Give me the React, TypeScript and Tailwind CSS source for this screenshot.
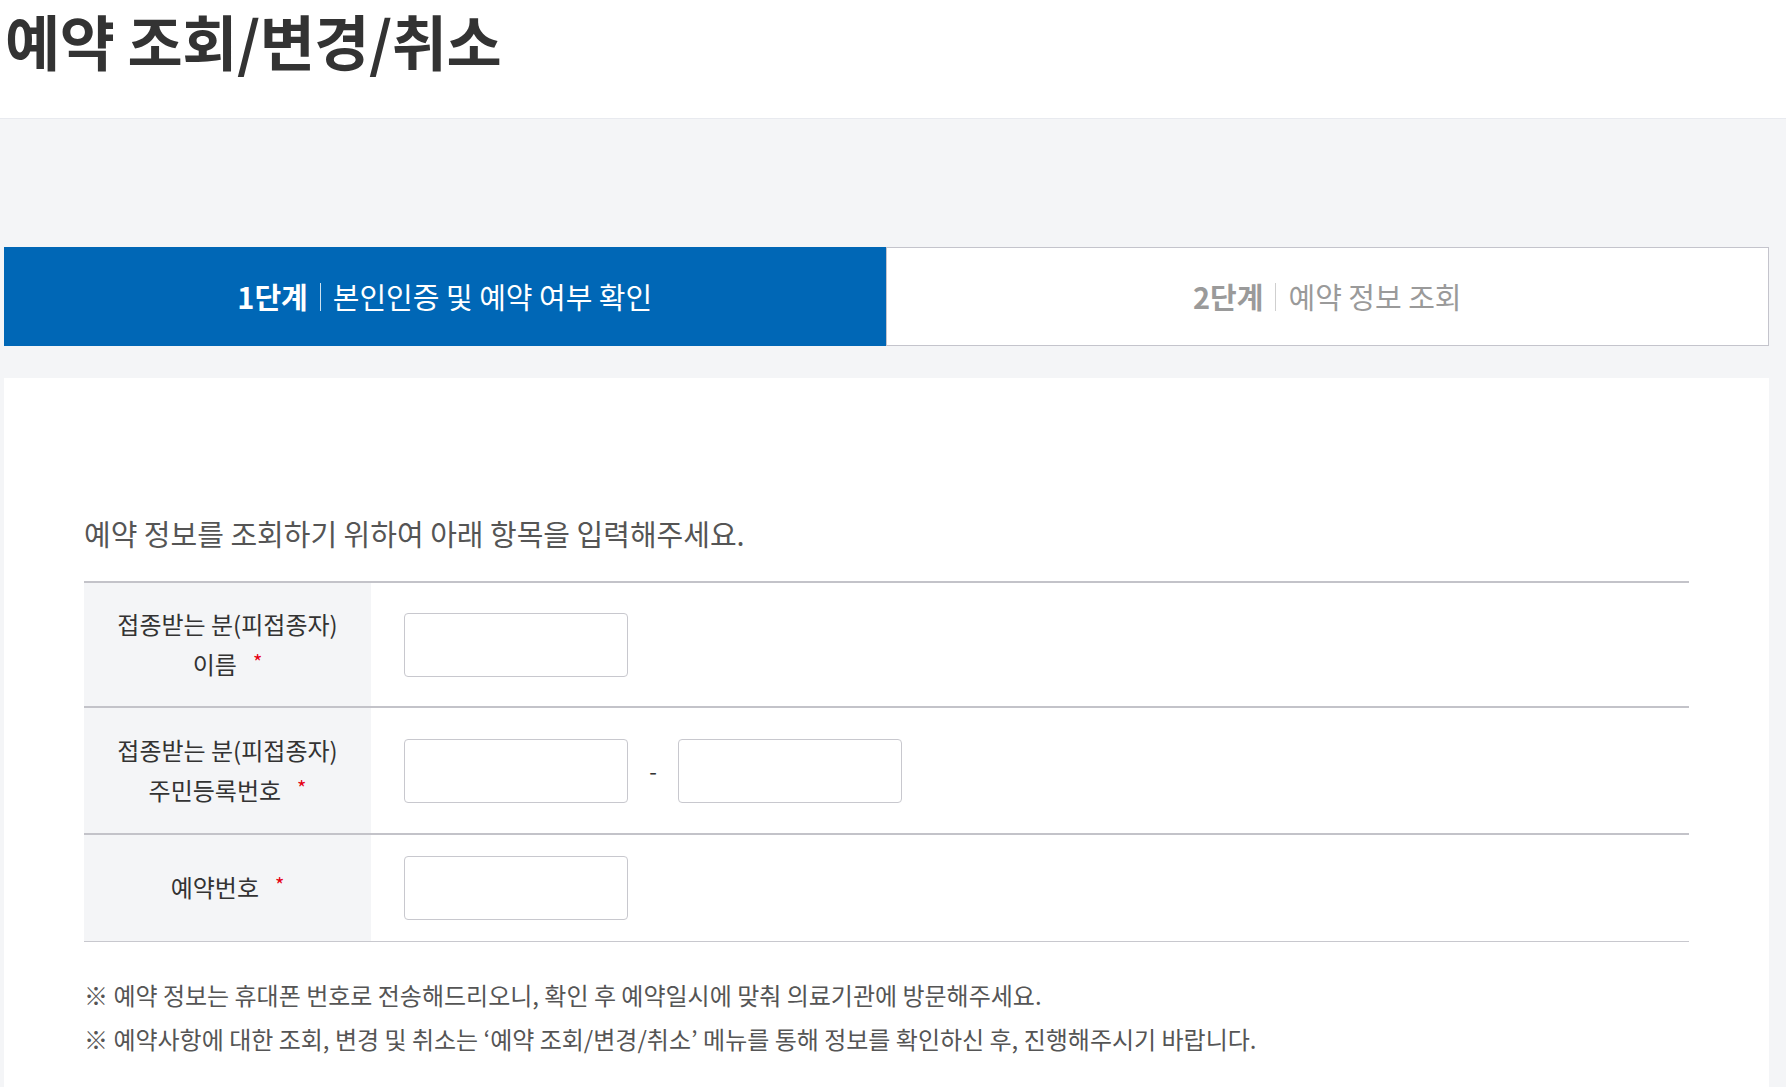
const font = { fontFamily: '"Noto Sans CJK KR", "Noto Sans", sans-serif' };

function Star() {
  return <span className="ml-[16px] text-[20px] text-[#e60012] relative top-[-4px]">*</span>;
}

function Label({ lines }: { lines: string[] }) {
  return (
    <div className="w-[287px] shrink-0 bg-[#f4f5f7] flex flex-col items-center justify-center text-[24px] leading-[40px] text-[#333]">
      {lines.map((l, i) => (
        <div key={i}>
          {l}
          {i === lines.length - 1 && <Star />}
        </div>
      ))}
    </div>
  );
}

function Field() {
  return <input type="text" className="w-[224px] h-[64px] border border-[#c8c8ce] rounded-[4px] bg-white outline-none" />;
}

export default function App() {
  return (
    <div className="min-h-[1087px] bg-[#f4f5f7]" style={font}>
      <header className="h-[119px] bg-white border-b border-[#e8eaef] pt-[4px]">
        <h1 className="pl-[5px] text-[60px] leading-[72px] font-bold text-[#333] tracking-[-0.5px]">예약 조회/변경/취소</h1>
      </header>

      <div className="pt-[128px] pl-[4px] pr-[17px]">
        <div className="flex h-[99px]">
          <div className="flex-1 bg-[#0067b6] flex items-center justify-center text-white text-[29px]">
            <span className="font-bold">1단계</span>
            <span className="w-px h-[28px] bg-white/80 mx-[12px]" />
            <span>본인인증 및 예약 여부 확인</span>
          </div>
          <div className="flex-1 bg-white border border-[#c4c4cc] flex items-center justify-center text-[#9a9a9a] text-[29px]">
            <span className="font-bold">2단계</span>
            <span className="w-px h-[28px] bg-[#cfcfcf] mx-[12px]" />
            <span>예약 정보 조회</span>
          </div>
        </div>

        <div className="mt-[32px] bg-white min-h-[709px] px-[80px] pt-[135px] pb-[40px]">
          <p className="text-[29px] leading-[40px] text-[#555] mb-[28px]">
            예약 정보를 조회하기 위하여 아래 항목을 입력해주세요.
          </p>

          <div className="border-t-2 border-[#c3c3c9]">
            <div className="flex h-[125px] border-b-2 border-[#c3c3c9]">
              <Label lines={["접종받는 분(피접종자)", "이름"]} />
              <div className="flex items-center pl-[33px]">
                <Field />
              </div>
            </div>
            <div className="flex h-[127px] border-b-2 border-[#c3c3c9]">
              <Label lines={["접종받는 분(피접종자)", "주민등록번호"]} />
              <div className="flex items-center pl-[33px]">
                <Field />
                <span className="w-[50px] text-center text-[22px] text-[#333]">-</span>
                <Field />
              </div>
            </div>
            <div className="flex h-[107px] border-b border-[#c8c8ce]">
              <Label lines={["예약번호"]} />
              <div className="flex items-center pl-[33px]">
                <Field />
              </div>
            </div>
          </div>

          <div className="mt-[31px] text-[24px] leading-[44px] text-[#555]">
            <p>※ 예약 정보는 휴대폰 번호로 전송해드리오니, 확인 후 예약일시에 맞춰 의료기관에 방문해주세요.</p>
            <p>※ 예약사항에 대한 조회, 변경 및 취소는 ‘예약 조회/변경/취소’ 메뉴를 통해 정보를 확인하신 후, 진행해주시기 바랍니다.</p>
          </div>
        </div>
      </div>
    </div>
  );
}
